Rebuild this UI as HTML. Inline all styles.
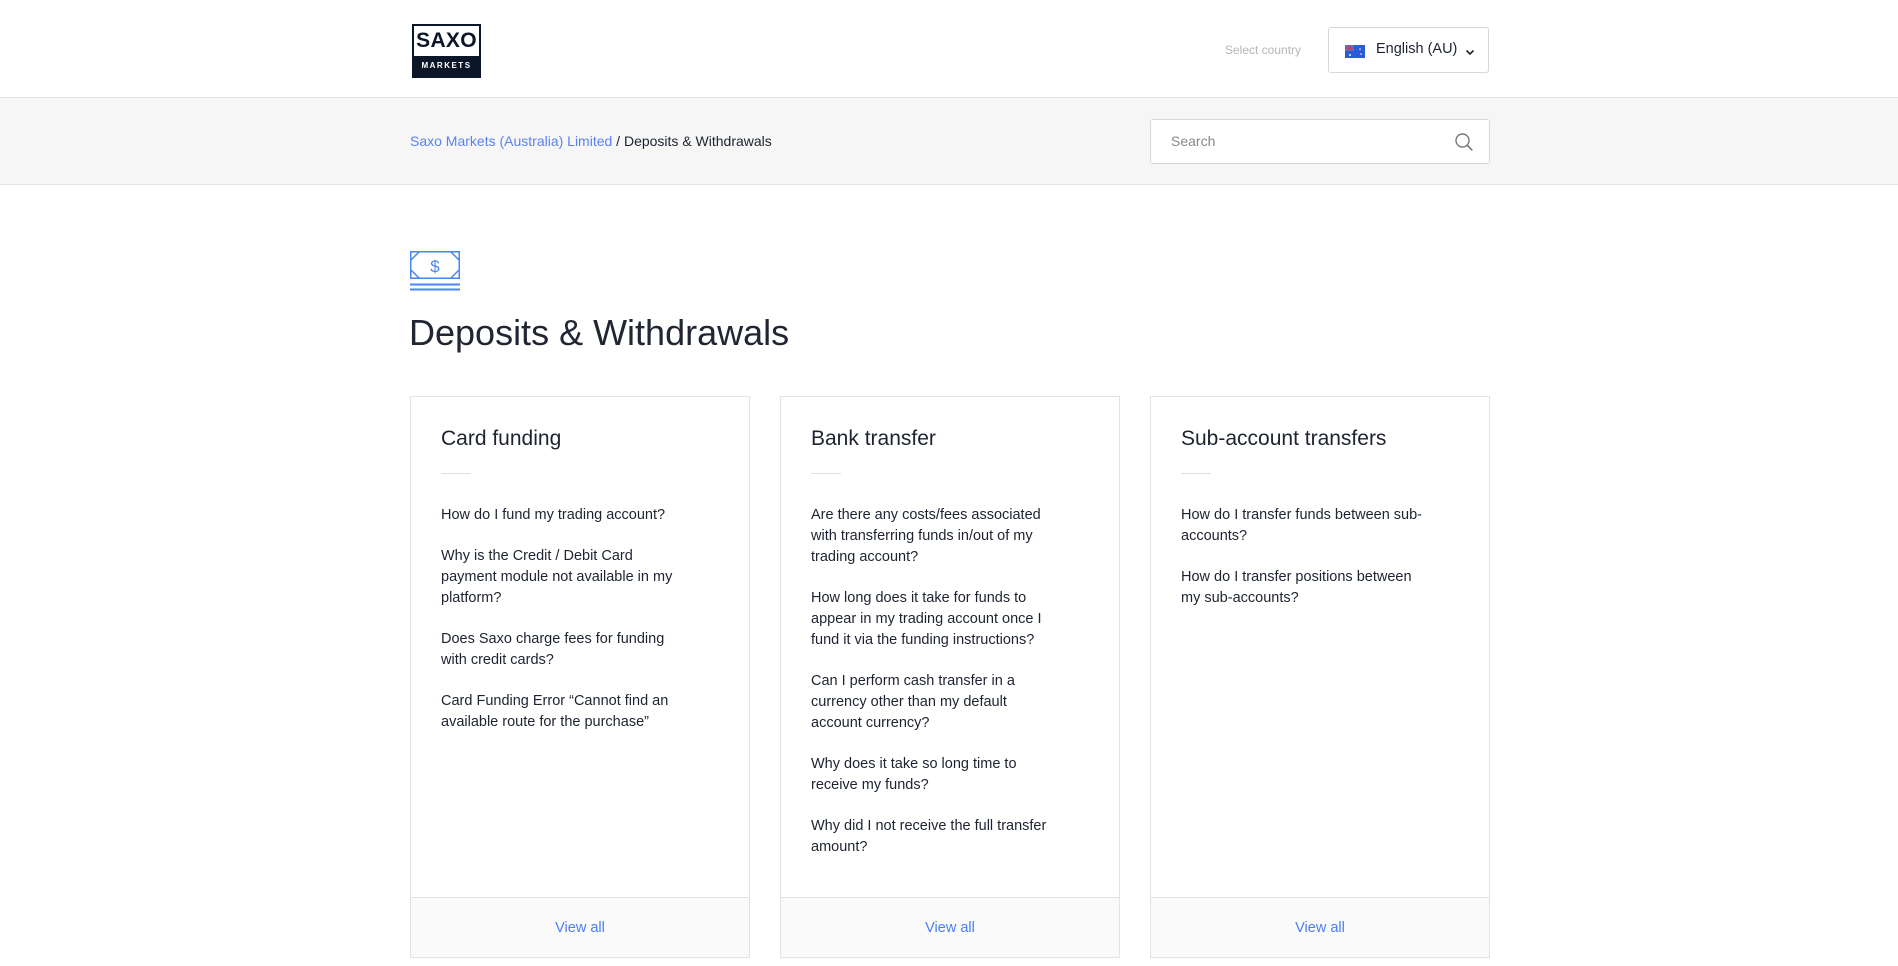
<!DOCTYPE html>
<html><head><meta charset="utf-8"><style>
*{margin:0;padding:0;box-sizing:border-box}
body{width:1898px;height:966px;overflow:hidden;background:#fff;font-family:"Liberation Sans",sans-serif;color:#1a1a2e;position:relative}
.abs{position:absolute}
.hdr{top:0;left:0;width:1898px;height:98px;border-bottom:1px solid #e2e2e2;background:#fff}
.band{top:98px;left:0;width:1898px;height:87px;background:#f6f6f6;border-bottom:1px solid #e2e2e2}
.card{border:1px solid #e3e3e3;background:#fff;width:340px;top:396px;height:562px}
.card h3{position:absolute;left:30px;top:30px;font-size:21px;font-weight:normal;color:#1d2330}
.card .dv{position:absolute;left:30px;top:76px;width:30px;height:1px;background:#e0e0e0}
.card ul{position:absolute;left:30px;top:108px;width:250px;list-style:none;font-size:14.5px;line-height:21px;color:#1d2330}
.card li{margin-bottom:20px}
.card .ft{position:absolute;left:0;bottom:0;width:338px;height:60px;border-top:1px solid #e3e3e3;background:#fafafa;text-align:center;line-height:60px;color:#4a7ef5;font-size:14.5px}
</style></head><body>
<div class="abs hdr"></div>
<div class="abs" style="left:412px;top:24px;width:69px;height:54px;border:2px solid #0b1629;background:#fff">
 <div style="text-align:center;font-weight:bold;font-size:21px;line-height:30px;color:#0b1629;letter-spacing:0.3px">SAXO</div>
 <div style="position:absolute;left:0;right:0;bottom:0;height:20px;background:#0b1629;color:#fff;font-size:8px;font-weight:bold;letter-spacing:1.5px;text-align:center;line-height:20px">MARKETS</div>
</div>
<div class="abs" style="left:1225px;top:43px;font-size:12px;color:#b5b5b5">Select country</div>
<div class="abs" style="left:1328px;top:27px;width:161px;height:46px;border:1px solid #d8d8d8;border-radius:3px">
 <svg class="abs" style="left:16px;top:17px" width="20" height="13"><rect width="20" height="13" fill="#2b5bd6"/><rect width="9" height="6" fill="#5b6fd0"/><path d="M0 3h9M4.5 0v6" stroke="#e33" stroke-width="1.5"/><circle cx="5" cy="10" r="1" fill="#fff"/><circle cx="15" cy="4" r=".8" fill="#fff"/><circle cx="16" cy="9" r=".8" fill="#fff"/></svg>
 <div class="abs" style="left:47px;top:13px;font-size:14.5px;color:#1d2330">English (AU)</div>
 <svg class="abs" style="left:136px;top:21px" width="10" height="7"><path d="M1.5 1.5l3.5 3.5 3.5-3.5" stroke="#1d2330" stroke-width="1.6" fill="none"/></svg>
</div>
<div class="abs band"></div>
<div class="abs" style="left:410px;top:133px;font-size:14px;color:#1d2330"><span style="color:#5b82f0">Saxo Markets (Australia) Limited</span> / Deposits &amp; Withdrawals</div>
<div class="abs" style="left:1150px;top:119px;width:340px;height:45px;border:1px solid #d8d8d8;border-radius:3px;background:#fff">
 <div class="abs" style="left:20px;top:13px;font-size:14px;color:#888">Search</div>
 <svg class="abs" style="left:303px;top:12px" width="20" height="20"><circle cx="8.5" cy="8.5" r="6.5" stroke="#777" stroke-width="1.4" fill="none"/><path d="M13.3 13.3l5 5" stroke="#777" stroke-width="1.6"/></svg>
</div>
<svg class="abs" style="left:410px;top:251px" width="50" height="40"><g stroke="#4a86f0" stroke-width="1.5" fill="none"><rect x="0.75" y="0.75" width="48.5" height="26.5"/><path d="M1 9l8-8M41 1l8 8M1 19l8 8M41 27l8-8"/><path d="M0 33.5h50M0 38.5h50" stroke-width="2"/></g><text x="25" y="21" text-anchor="middle" font-family="Liberation Sans" font-size="17" fill="#4a86f0">$</text></svg>
<div class="abs" style="left:409px;top:312px;font-size:36px;color:#222633">Deposits &amp; Withdrawals</div>

<div class="abs card" style="left:410px"><h3>Card funding</h3><div class="dv"></div><ul>
<li>How do I fund my trading account?</li>
<li>Why is the Credit / Debit Card payment module not available in my platform?</li>
<li>Does Saxo charge fees for funding with credit cards?</li>
<li>Card Funding Error “Cannot find an available route for the purchase”</li></ul><div class="ft">View all</div></div>
<div class="abs card" style="left:780px"><h3>Bank transfer</h3><div class="dv"></div><ul>
<li>Are there any costs/fees associated with transferring funds in/out of my trading account?</li>
<li>How long does it take for funds to appear in my trading account once I fund it via the funding instructions?</li>
<li>Can I perform cash transfer in a currency other than my default account currency?</li>
<li>Why does it take so long time to receive my funds?</li>
<li>Why did I not receive the full transfer amount?</li></ul><div class="ft">View all</div></div>
<div class="abs card" style="left:1150px"><h3>Sub-account transfers</h3><div class="dv"></div><ul>
<li>How do I transfer funds between sub-accounts?</li>
<li>How do I transfer positions between my sub-accounts?</li></ul><div class="ft">View all</div></div>
</body></html>
